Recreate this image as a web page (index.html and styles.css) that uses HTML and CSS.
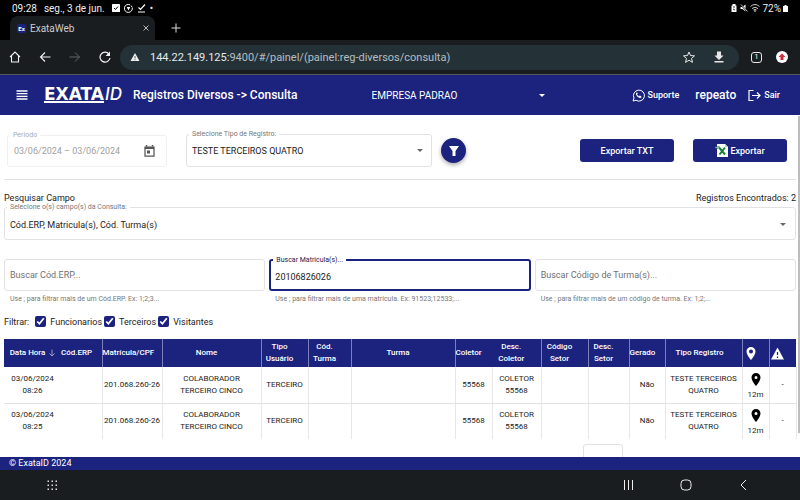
FILE: index.html
```html
<!DOCTYPE html>
<html lang="pt-BR">
<head>
<meta charset="utf-8">
<meta name="viewport" content="width=device-width, initial-scale=1">
<title>ExataWeb</title>
<link rel="stylesheet" href="styles.css">
</head>
<body>
<div class="status">
  <span>09:28</span>
  <span class="status-date">seg., 3 de jun.</span>
  <svg class="i8" viewBox="0 0 16 16"><rect width="16" height="16" rx="1" fill="#fff"/><path d="M4 8l3 3 5-6" fill="none" stroke="#000" stroke-width="2"/></svg>
  <svg class="i9" viewBox="0 0 18 18" fill="none" stroke="#fff" stroke-width="2"><path d="M12 1.500A8 8 0 1 0 16.500 7M14 3l2 3"/><path d="M5.500 6h7L9 13z" fill="#fff" stroke="none"/></svg>
  <svg class="i9" viewBox="0 0 18 18" fill="none" stroke="#fff" stroke-width="2.400"><path d="M3 7l4 4L16 1M2 16h14"/></svg>
  <span>•</span>
  <span class="status-right">
    <svg class="i8" viewBox="0 0 16 16"><path d="M5 0h6v3h2v13H3V3h2z" fill="#fff"/><path d="M6 6h4M6 10l4 2" stroke="#000" stroke-width="1.500"/></svg>
    <svg class="i8" viewBox="0 0 16 16"><path d="M1 6h4l6-5v14l-6-5H1z" fill="#fff"/><path d="M1 1l14 14" stroke="#000" stroke-width="3"/><path d="M2 1l13 14" stroke="#fff" stroke-width="1.500"/></svg>
    <svg class="i10" viewBox="0 0 20 16" fill="none" stroke="#ccc" stroke-width="2"><path d="M1 5q9-8 18 0M4 9q6-5 12 0M7 12q3-2 6 0"/><circle cx="10" cy="14" r="1"/></svg>
    <span>72%</span>
    <svg class="battery" viewBox="0 0 10 14"><path d="M3 0h4v2h3v12H0V2h3z" fill="#fff"/></svg>
  </span>
</div>
<div class="tabs">
  <div class="tab">
    <span class="favicon">Ex</span>
    <span class="tab-title">ExataWeb</span>
    <button class="bare" aria-label="Fechar guia"><svg class="i8" viewBox="0 0 16 16" stroke="#bbb" stroke-width="2"><path d="M3 3l10 10M13 3L3 13"/></svg></button>
  </div>
  <button class="bare new-tab" aria-label="Nova guia"><svg class="i10" viewBox="0 0 20 20" stroke="#ddd" stroke-width="2"><path d="M10 1v18M1 10h18"/></svg></button>
</div>
<div class="toolbar">
  <button class="bare" aria-label="Início"><svg class="i12" viewBox="0 0 24 24" fill="none" stroke="#f1f1f1" stroke-width="2.200"><path d="M2 12L12 2l10 10M5 10v12h14V10"/></svg></button>
  <button class="bare" aria-label="Voltar"><svg class="i12" viewBox="0 0 24 24" fill="none" stroke="#f1f1f1" stroke-width="2.200"><path d="M23 12H3M12 3l-9 9 9 9"/></svg></button>
  <button class="bare" aria-label="Avançar"><svg class="i12" viewBox="0 0 24 24" fill="none" stroke="#606468" stroke-width="2"><path d="M1 12h20M12 3l9 9-9 9"/></svg></button>
  <button class="bare" aria-label="Recarregar"><svg class="i12" viewBox="0 0 24 24" fill="none" stroke="#f1f1f1" stroke-width="2.400"><path d="M20 6A10 10 0 1 0 22 14"/><path d="M22 1v9h-9z" fill="#f1f1f1" stroke="none"/></svg></button>
  <div class="omnibox">
    <svg class="i10" viewBox="0 0 20 18"><path d="M10 1l9 16H1z" fill="#eee"/><path d="M10 7v5M10 13.500v2" stroke="#24343a" stroke-width="1.500"/></svg>
    <div class="url" role="textbox" aria-label="Endereço"><b>144.22.149.125:</b>9400/#/painel/(painel:reg-diversos/consulta)</div>
    <button class="bare" aria-label="Favoritar"><svg class="i12" viewBox="0 0 24 24" fill="none" stroke="#e8e8e8" stroke-width="2"><path d="M12 2l3 7 8 .7-6 5.200 2 7.800-7-4.200-7 4.200 2-7.800-6-5.200L9 9z"/></svg></button>
    <button class="bare" aria-label="Baixar"><svg class="i12" viewBox="0 0 24 24" fill="#e8e8e8"><path d="M8 1h8v8h5l-9 9-9-9h5zM3 20h18v3H3z"/></svg></button>
  </div>
  <button class="bare tab-count" aria-label="Guias abertas">1</button>
  <button class="bare" aria-label="Atualizar"><svg class="i12" viewBox="0 0 24 24"><circle cx="12" cy="12" r="12" fill="#fff"/><path d="M12 5l7 7h-4v6H9v-6H5z" fill="#d6283c"/></svg></button>
</div>

<header class="app-header">
  <button class="bare" aria-label="Menu"><svg class="i12" viewBox="0 0 24 24" stroke="#fff" stroke-width="2.600"><path d="M1 4h22M1 9.300h22M1 14.600h22M1 20h22"/></svg></button>
  <div class="logo"><span class="logo-main">EXATA</span><span class="logo-id">ID</span></div>
  <h1>Registros Diversos -&gt; Consulta</h1>
  <div class="company">
    <select aria-label="Empresa"><option>EMPRESA PADRAO</option></select>
    <span class="caret"></span>
  </div>
  <a class="action support" href="#"><svg class="i13" viewBox="0 0 26 26" fill="none" stroke="#fff" stroke-width="2"><path d="M2 24l2-6A11 11 0 1 1 8 22.500z"/><path d="M9 7c-4 4 5 14 10 10l-1-3-3-1-1 2-4-4 1.500-1.500L10.500 7z" fill="#fff" stroke="none"/></svg>Suporte</a>
  <span class="user">repeato</span>
  <a class="action" href="#"><svg class="i13" viewBox="0 0 26 24" fill="none" stroke="#fff" stroke-width="2.400"><path d="M11 2H2v20h9M8 12h15M18 6l6 6-6 6"/></svg>Sair</a>
</header>

<div class="viewport">
<main>
  <section class="top-row">
    <div class="field period">
      <label for="period">Período</label>
      <input id="period" value="03/06/2024 – 03/06/2024" disabled>
      <svg class="calendar" viewBox="0 0 22 24"><path d="M5 0v3M17 0v3" stroke="#555" stroke-width="3"/><path d="M2 4h18v18H2z" fill="none" stroke="#555" stroke-width="2.500"/><path d="M2 6h18" stroke="#555" stroke-width="4"/><path d="M6 11h6v6H6z" fill="#555"/></svg>
    </div>
    <div class="field type">
      <label for="type">Selecione Tipo de Registro:</label>
      <select id="type"><option>TESTE TERCEIROS QUATRO</option></select>
      <span class="caret"></span>
    </div>
    <button class="fab" aria-label="Filtrar"><svg class="i12" viewBox="0 0 24 24" fill="#fff"><path d="M2 2h20l-7 10v10H9V12z"/></svg></button>
    <div class="exports">
      <button class="primary">Exportar TXT</button>
      <button class="primary"><svg class="i13" viewBox="0 0 26 26"><path d="M4 0h16l6 6v20H4z" fill="#fff"/><path d="M20 0v6h6z" fill="#b9dcc0"/><path d="M9 8l11 13M20 7L9 21" stroke="#16803c" stroke-width="4"/><path d="M0 5h10v4H0z" fill="#17703a"/><path d="M1 7h8" stroke="#fff"/></svg>Exportar</button>
    </div>
  </section>

  <section class="search">
    <div class="summary"><span>Pesquisar Campo</span><span>Registros Encontrados: 2</span></div>
    <div class="field fields">
      <label for="fields">Selecione o(s) campo(s) da Consulta:</label>
      <select id="fields"><option>Cód.ERP, Matricula(s), Cód. Turma(s)</option></select>
      <span class="caret"></span>
    </div>
    <div class="inputs">
      <div>
        <div class="field"><input aria-label="Buscar Cód.ERP" placeholder="Buscar Cód.ERP..."></div>
        <p class="hint">Use ; para filtrar mais de um Cód.ERP. Ex: 1;2;3...</p>
      </div>
      <div>
        <div class="field focused"><label for="mat">Buscar Matricula(s)...</label><input id="mat" value="20106826026" autofocus></div>
        <p class="hint">Use ; para filtrar mais de uma matricula. Ex: 91523;12533;...</p>
      </div>
      <div>
        <div class="field"><input aria-label="Buscar Código de Turma(s)" placeholder="Buscar Código de Turma(s)..."></div>
        <p class="hint">Use ; para filtrar mais de um código de turma. Ex: 1;2;...</p>
      </div>
    </div>
    <div class="checks">
      <span class="checks-title">Filtrar:</span>
      <label><input type="checkbox" checked>Funcionarios</label>
      <label><input type="checkbox" checked>Terceiros</label>
      <label><input type="checkbox" checked>Visitantes</label>
    </div>
  </section>

  <table>
    <colgroup><col class="c-date"><col class="c-erp"><col class="c-cpf"><col class="c-name"><col class="c-kind"><col class="c-group-id"><col class="c-group"><col class="c-reader"><col class="c-reader-desc"><col class="c-sector"><col class="c-sector-desc"><col class="c-made"><col class="c-type"><col class="c-pin"><col class="c-alert"></colgroup>
    <thead><tr>
      <th class="open">Data Hora <svg class="sort" viewBox="0 0 14 18" fill="none" stroke="#a9add4" stroke-width="2"><path d="M7 1v15M1 10l6 6 6-6"/></svg></th>
      <th class="left">Cód.ERP</th><th class="left">Matrícula/CPF</th><th class="trail">Nome</th><th class="trail">Tipo Usuário</th><th class="trail">Cód. Turma</th><th class="trail">Turma</th><th class="left open">Coletor</th><th class="trail">Desc. Coletor</th><th class="trail">Código Setor</th><th class="trail">Desc. Setor</th><th class="left">Gerado</th><th class="kind">Tipo Registro</th>
      <th class="left icon-cell"><svg class="pin" viewBox="0 0 20 26" fill="#fff" role="img" aria-label="Localização"><path fill-rule="evenodd" d="M10 0a9 9 0 0 0-9 9c0 7 9 17 9 17s9-10 9-17a9 9 0 0 0-9-9zm0 5a4 4 0 1 1 0 8 4 4 0 0 1 0-8z"/></svg></th>
      <th class="left open alert-cell"><svg class="i13" viewBox="0 0 26 24" role="img" aria-label="Alerta"><path d="M13 0l13 24H0z" fill="#fff"/><path d="M13 9v6M13 18v3" stroke="#1b237e" stroke-width="2.500"/></svg></th>
    </tr></thead>
    <tbody>
      <tr><td>03/06/2024 08:26</td><td></td><td>201.068.260-26</td><td>COLABORADOR TERCEIRO CINCO</td><td>TERCEIRO</td><td></td><td></td><td>55568</td><td>COLETOR 55568</td><td></td><td></td><td>Não</td><td>TESTE TERCEIROS QUATRO</td><td><svg class="pin" viewBox="0 0 20 26"><path fill-rule="evenodd" d="M10 0a9 9 0 0 0-9 9c0 7 9 17 9 17s9-10 9-17a9 9 0 0 0-9-9zm0 6a3 3 0 1 1 0 6 3 3 0 0 1 0-6z"/></svg><span class="dist">12m</span></td><td>-</td></tr>
      <tr><td>03/06/2024 08:25</td><td></td><td>201.068.260-26</td><td>COLABORADOR TERCEIRO CINCO</td><td>TERCEIRO</td><td></td><td></td><td>55568</td><td>COLETOR 55568</td><td></td><td></td><td>Não</td><td>TESTE TERCEIROS QUATRO</td><td><svg class="pin" viewBox="0 0 20 26"><path fill-rule="evenodd" d="M10 0a9 9 0 0 0-9 9c0 7 9 17 9 17s9-10 9-17a9 9 0 0 0-9-9zm0 6a3 3 0 1 1 0 6 3 3 0 0 1 0-6z"/></svg><span class="dist">12m</span></td><td>-</td></tr>
    </tbody>
  </table>
  <div class="paginator">
    <label for="size">Itens por página:</label>
    <div class="field size"><select id="size"><option>15</option></select><span class="caret"></span></div>
  </div>
</main>
<div class="scroll"></div>
</div>

<footer>© ExataID 2024</footer>
<nav class="system">
  <button class="bare apps" aria-label="Aplicativos"><svg class="i12" viewBox="0 0 24 24" fill="#ddd"><path d="M3 3h3v3H3zM11 3h3v3h-3zM19 3h3v3h-3zM3 11h3v3H3zM11 11h3v3h-3zM19 11h3v3h-3zM3 19h3v3H3zM11 19h3v3h-3zM19 19h3v3h-3z"/></svg></button>
  <button class="bare" aria-label="Recentes"><svg class="i12" viewBox="0 0 24 24" stroke="#eee" stroke-width="2"><path d="M5 2v20M13 2v20M21 2v20"/></svg></button>
  <button class="bare" aria-label="Tela inicial"><svg class="i12" viewBox="0 0 24 24" fill="none" stroke="#eee" stroke-width="2"><rect x="2" y="2" width="20" height="20" rx="7"/></svg></button>
  <button class="bare" aria-label="Voltar ao anterior"><svg class="i12" viewBox="0 0 24 24" fill="none" stroke="#eee" stroke-width="2"><path d="M16 2L6 12l10 10"/></svg></button>
</nav>
</body>
</html>
```
FILE: styles.css
```css
:root {
  --navy: #1b237e;
  --line: #e2e2e4;
  --bar: #1a1d20;
}
* { box-sizing: border-box; }
body {
  margin: 0;
  height: 100vh;
  display: flex;
  flex-direction: column;
  font-family: Roboto, "Liberation Sans", sans-serif;
  font-size: 9px;
  color: #222;
  background: #fff;
  overflow: hidden;
}
svg { display: block; flex: none; }
button, input, select { font: inherit; color: inherit; }
select { appearance: none; border: 0; background: none; padding: 0; outline: 0; }
.bare { display: block; padding: 0; border: 0; background: none; }
.i8 { width: 8px; height: 8px; }
.i9 { width: 9px; height: 9px; }
.i10 { width: 10px; height: 10px; }
.i12 { width: 12px; height: 12px; }
.i13 { width: 13px; height: 13px; }

/* Device status bar */
.status {
  display: flex;
  align-items: center;
  gap: 4px;
  height: 16px;
  padding: 0 12px;
  background: #000;
  color: #eee;
  font-size: 10px;
}
.status-date { margin: 0 3px; }
.status-right { display: flex; align-items: center; gap: 2px; margin-left: auto; }
.battery { width: 5px; height: 7px; }

/* Browser chrome */
.tabs { display: flex; align-items: center; height: 24px; padding-left: 10px; background: #000; color: #ccc; }
.tab {
  display: flex;
  align-items: center;
  gap: 4px;
  width: 145px;
  height: 24px;
  padding: 0 5px 0 7px;
  border-radius: 8px 8px 0 0;
  background: var(--bar);
  font-size: 10px;
}
.tab-title { flex: 1; }
.favicon { width: 9px; height: 9px; border-radius: 2px; background: var(--navy); color: #fff; font-size: 6px; font-weight: 700; line-height: 9px; text-align: center; }
.new-tab { margin-left: 16px; }
.toolbar { display: flex; align-items: center; gap: 18px; height: 35px; padding: 0 12px 0 9px; background: var(--bar); border-bottom: 1px solid #55585c; }
.omnibox {
  display: flex;
  align-items: center;
  gap: 10px;
  flex: 1;
  height: 25px;
  margin: 0 -6px 0 -9px;
  padding: 0 14px 0 10px;
  border-radius: 13px;
  background: #243238;
}
.omnibox .bare { margin-left: 8px; }
.url { flex: 1; font-size: 11px; color: #b4bec2; white-space: nowrap; }
.url b { font-weight: 400; color: #e6e9ea; }
.tab-count { width: 11px; height: 11px; margin-right: -4px; border: 1px solid #e8e8e8; border-radius: 3px; color: #fff; font-size: 7px; line-height: 9px; text-align: center; }

/* Application header */
.app-header { display: flex; align-items: center; height: 40px; padding: 0 20px 0 16px; background: var(--navy); color: #fff; }
.logo { display: flex; align-items: flex-start; margin-left: 16px; line-height: 14px; font-size: 17px; }
.logo-main { font-family: "DejaVu Sans", sans-serif; font-weight: 700; border-bottom: 2px solid #fff; }
.logo-id { margin-left: 1px; font-family: Inter, sans-serif; font-style: italic; font-weight: 500; }
h1 { margin: 0 0 0 11px; font-size: 12px; font-weight: 500; white-space: nowrap; }
.company { display: flex; align-items: center; flex: 1; margin: 0 87px 0 74px; font-size: 10px; }
.company select { flex: 1; }
.caret { border: 3px solid transparent; border-top-color: currentColor; border-bottom: 0; }
.action { display: flex; align-items: center; gap: 3px; color: #fff; font-size: 9px; font-weight: 500; text-decoration: none; }
.user { margin: 0 12px 0 16px; font-size: 12px; font-weight: 500; }

/* Page */
.viewport { display: flex; flex: 1; min-height: 0; overflow: hidden; }
main { flex: 1; min-width: 0; padding: 0 2px 0 4px; }
.scroll { width: 2px; margin: 1px 0 24px; background: #bdbdbd; }
.field { position: relative; display: flex; align-items: center; border: 1px solid var(--line); border-radius: 3px; }
.field > input, .field > select { flex: 1; min-width: 0; width: 100%; border: 0; outline: 0; padding: 0; background: none; }
.field > label { position: absolute; top: -5px; left: 2px; padding: 0 3px; background: #fff; color: #777; font-size: 7px; line-height: 8px; white-space: nowrap; }
.field .caret { color: #666; }
.top-row { display: flex; align-items: center; height: 65px; padding: 7px 9px 0 3px; border-bottom: 1px solid var(--line); }
.period { width: 160px; height: 32px; margin-right: 19px; padding: 0 11px 0 6px; border-color: #f0f0f0; }
.period > input { color: #a0a0a0; }
.period > label { color: #aaa; }
.calendar { width: 11px; height: 12px; }
.type { width: 246px; height: 33px; padding: 0 8px 0 5px; }
.fab { display: grid; place-items: center; width: 25px; height: 25px; margin-left: 9px; padding: 0; border: 0; border-radius: 50%; background: var(--navy); box-shadow: 0 2px 4px #0005; }
.exports { display: flex; gap: 19px; margin-left: auto; }
.primary { display: flex; align-items: center; justify-content: center; gap: 2px; width: 94px; height: 23px; border: 0; border-radius: 3px; background: var(--navy); color: #fff; font-weight: 500; }
.summary { display: flex; justify-content: space-between; padding-top: 13px; line-height: 11px; }
.fields { height: 33px; margin-top: 3px; padding: 2px 9px 0 5px; }
.inputs { display: grid; grid-template-columns: repeat(3, 1fr); gap: 4px; margin-top: 19px; }
.inputs .field { height: 32px; padding: 0 5px; }
.inputs .focused { border: 2px solid var(--navy); padding: 4px 4px 0; }
.focused > label { color: #1d2050; }
input::placeholder { color: #707070; opacity: 1; }
.hint { margin: 4px 6px 0; color: #777; font-size: 7px; line-height: 9px; white-space: nowrap; }
.checks { display: flex; align-items: center; gap: 2px; height: 11px; margin: 12px 0; }
.checks-title { margin-right: 4px; }
.checks label { display: flex; align-items: center; gap: 4px; }
.checks input { width: 11px; height: 11px; margin: 0; accent-color: var(--navy); }

/* Records */
table { width: 100%; table-layout: fixed; border-collapse: collapse; line-height: 12px; }
.c-date { width: 57px; } .c-erp { width: 41px; } .c-cpf { width: 60px; }
.c-name { width: 99px; } .c-kind { width: 47px; } .c-group-id { width: 43px; }
.c-group { width: 104px; } .c-reader { width: 37px; } .c-reader-desc { width: 49px; }
.c-sector { width: 47px; } .c-sector-desc { width: 41px; } .c-made { width: 36px; }
.c-type { width: 77px; } .c-pin { width: 27px; } .c-alert { width: 27px; }
th, td { padding: 0; text-align: center; border-right: 1px solid #e8e8ea; font-size: 8px; }
th { height: 28px; background: var(--navy); color: #fff; font-weight: 500; border-color: #7c80b8; }
td { height: 36px; border-bottom: 1px solid var(--line); }
th.open, td:first-child { border-right: 0; }
th.left { text-align: left; }
th.trail { padding-right: 11px; padding-left: 1px; }
th.kind { padding-right: 8px; }
th.icon-cell { padding-left: 3px; }
th.alert-cell { padding-left: 1px; }
th:first-child { white-space: nowrap; }
td:first-child, td:nth-child(4) { padding: 0 5px; }
td:nth-child(4) { padding: 0 15px; }
td:nth-child(3) { white-space: nowrap; }
tbody tr:last-child td { border-bottom: 0; }
.sort { display: inline-block; width: 6px; height: 8px; margin-left: 2px; vertical-align: middle; }
.pin { width: 10px; height: 13px; }
td .pin { margin: 4px auto 3px; }
.dist { display: block; }
.paginator { display: flex; justify-content: flex-end; align-items: center; gap: 12px; margin: 5px 173px 0 0; font-size: 8px; color: #555; }
.size { width: 40px; height: 30px; padding: 0 6px; }

footer { height: 13px; padding-left: 9px; background: var(--navy); color: #fff; line-height: 13px; }
.system { display: flex; align-items: center; gap: 46px; height: 30px; padding: 0 50px 0 46px; background: var(--bar); }
.apps { margin-right: auto; }
```
